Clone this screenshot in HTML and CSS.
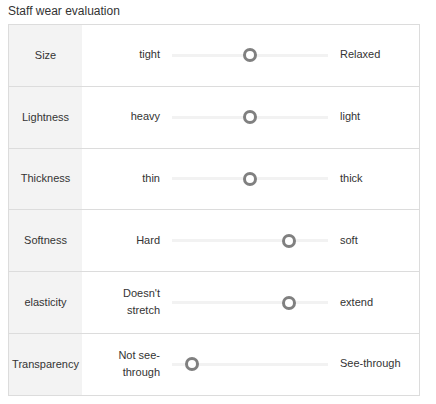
FILE: index.html
```html
<!DOCTYPE html>
<html>
<head>
<meta charset="utf-8">
<link rel="stylesheet" href="styles.css">
</head>
<body>
<div class="title">Staff wear evaluation</div>
<div class="table">
  <div class="row">
    <div class="label">Size</div>
    <div class="left">tight</div>
    <div class="slider"><div class="track"><span class="thumb" style="left:50%"></span></div></div>
    <div class="right">Relaxed</div>
  </div>
  <div class="row">
    <div class="label">Lightness</div>
    <div class="left">heavy</div>
    <div class="slider"><div class="track"><span class="thumb" style="left:50%"></span></div></div>
    <div class="right">light</div>
  </div>
  <div class="row">
    <div class="label">Thickness</div>
    <div class="left">thin</div>
    <div class="slider"><div class="track"><span class="thumb" style="left:50%"></span></div></div>
    <div class="right">thick</div>
  </div>
  <div class="row">
    <div class="label">Softness</div>
    <div class="left">Hard</div>
    <div class="slider"><div class="track"><span class="thumb" style="left:75%"></span></div></div>
    <div class="right">soft</div>
  </div>
  <div class="row">
    <div class="label">elasticity</div>
    <div class="left">Doesn't<br>stretch</div>
    <div class="slider"><div class="track"><span class="thumb" style="left:75%"></span></div></div>
    <div class="right">extend</div>
  </div>
  <div class="row">
    <div class="label">Transparency</div>
    <div class="left">Not see-<br>through</div>
    <div class="slider"><div class="track"><span class="thumb" style="left:12.5%"></span></div></div>
    <div class="right">See-through</div>
  </div>
</div>
</body>
</html>
```
FILE: styles.css
```css
html, body {
  margin: 0;
  padding: 0;
  background: #fff;
}
body {
  padding: 0 8px;
  font-family: "Liberation Sans", Arial, sans-serif;
  font-size: 11px;
  color: #333;
  width: 412px;
}
.title {
  font-size: 12px;
  height: 24px;
  line-height: 22px;
  color: #333;
}
.table {
  border: 1px solid #dcdcdc;
  width: 410px;
}
.row {
  display: grid;
  grid-template-columns: 73px 78px 180px 1fr;
  height: 60.8px;
  align-items: center;
  border-top: 1px solid #dcdcdc;
}
.row:first-child {
  border-top: none;
}
.label {
  background: #f3f3f3;
  height: 100%;
  display: flex;
  align-items: center;
  justify-content: center;
  text-align: center;
  padding-bottom: 1px;
  box-sizing: border-box;
}
.left {
  text-align: right;
  line-height: 17px;
  margin-top: -1px;
}
.right {
  line-height: 17px;
  margin-top: -1px;
}
.slider {
  padding: 0 12px;
}
.track {
  position: relative;
  height: 3px;
  background: #f2f2f2;
}
.thumb {
  position: absolute;
  top: 50%;
  width: 8px;
  height: 8px;
  border: 3px solid #808080;
  border-radius: 50%;
  background: #fff;
  transform: translate(-50%, -50%);
}
```
